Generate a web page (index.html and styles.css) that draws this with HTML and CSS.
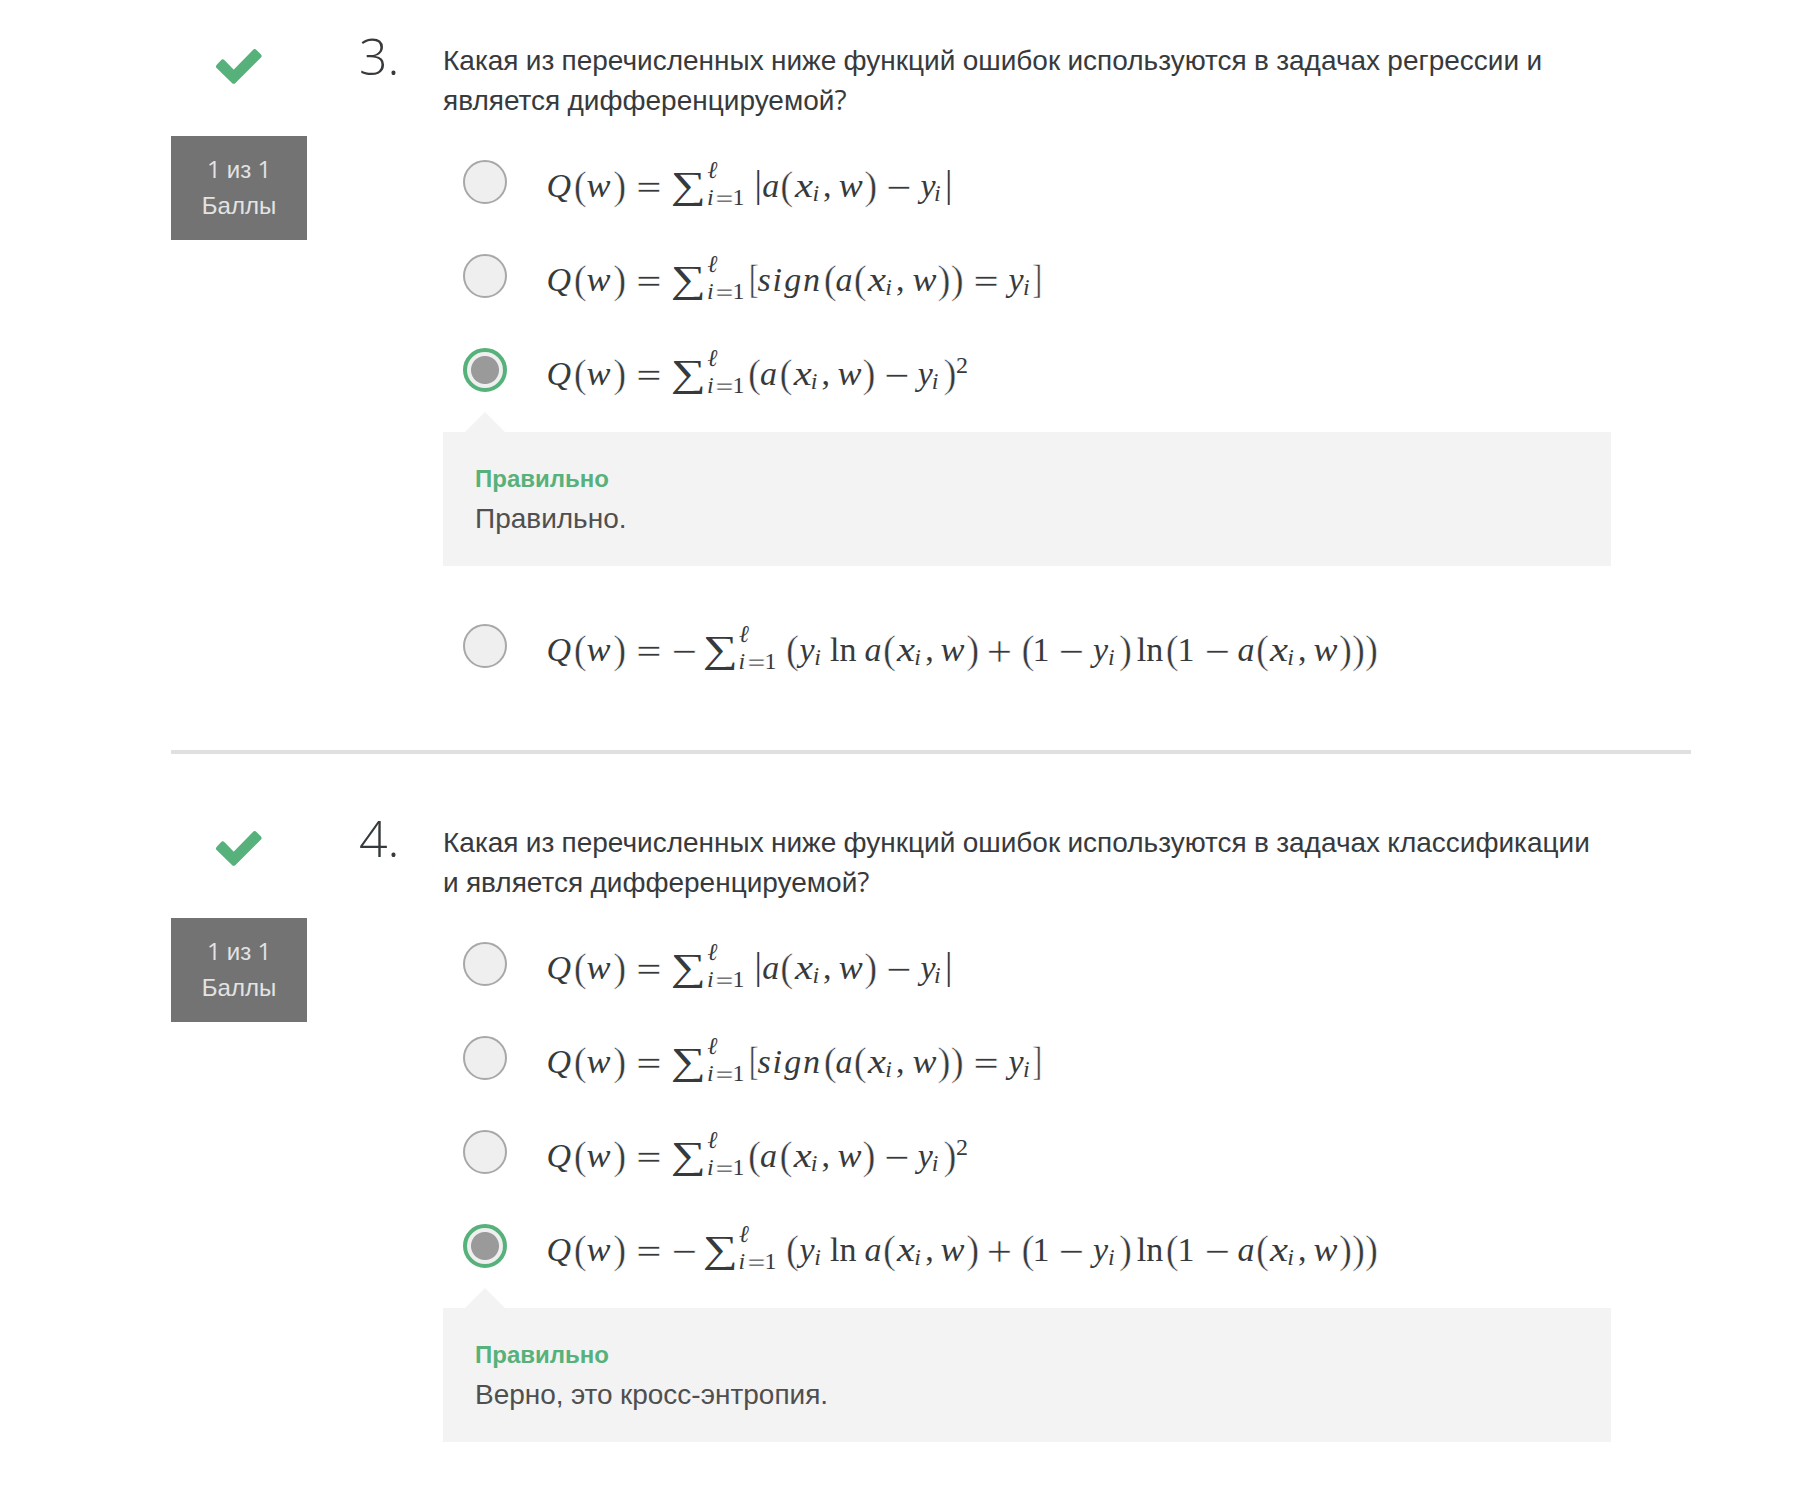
FILE: index.html
```html
<!DOCTYPE html>
<html lang="ru">
<head>
<meta charset="utf-8">
<title>Функции ошибок</title>
<link rel="stylesheet" href="styles.css">
</head>
<body>
<main class="quiz">
  <section class="question">
    <aside class="status">
      <svg class="check" viewBox="0 0 46 35"><path d="M2.600 17.500 6.800 13 17.700 24.200 38.700 2.700 43 7 17.700 32.200Z" /></svg>
      <div class="points"><span class="lat">1</span> из <span class="lat">1</span><br>Баллы</div>
    </aside>
    <div class="number">3.</div>
    <div class="content">
      <p class="prompt"><span class="line">Какая из перечисленных ниже функций ошибок используются в задачах регрессии и</span> <span class="line">является дифференцируемой<span class="lat">?</span></span></p>
      <div class="option"><span class="radio"></span>
        <svg class="formula" width="860" height="60"><text y="46"><tspan x="6.600">Q</tspan><tspan class="p" x="33.800">(</tspan><tspan x="46.500" textLength="24" lengthAdjust="spacingAndGlyphs">w</tspan><tspan class="p" x="73.200">)</tspan><tspan class="o" x="95.500">=</tspan><tspan class="sum" x="131" textLength="35" lengthAdjust="spacingAndGlyphs">∑</tspan><tspan class="sup ell" x="167.500">ℓ</tspan><tspan class="low" x="167">i</tspan><tspan class="low o" x="175">=</tspan><tspan class="low r" x="192.500">1</tspan><tspan class="bar" x="214.500">|</tspan><tspan x="222.300">a</tspan><tspan class="p" x="240.200">(</tspan><tspan x="254.900" textLength="18" lengthAdjust="spacingAndGlyphs">x</tspan><tspan class="sub" x="272.500">i</tspan><tspan class="r" x="283">,</tspan><tspan x="298.800" textLength="24" lengthAdjust="spacingAndGlyphs">w</tspan><tspan class="p" x="324.300">)</tspan><tspan class="o" x="345.500">−</tspan><tspan x="380.400">y</tspan><tspan class="sub" x="394">i</tspan><tspan class="bar" x="405">|</tspan></text></svg></div>
      <div class="option"><span class="radio"></span>
        <svg class="formula" width="860" height="60"><text y="46"><tspan x="6.600">Q</tspan><tspan class="p" x="33.800">(</tspan><tspan x="46.500" textLength="24" lengthAdjust="spacingAndGlyphs">w</tspan><tspan class="p" x="73.200">)</tspan><tspan class="o" x="95.500">=</tspan><tspan class="sum" x="131" textLength="35" lengthAdjust="spacingAndGlyphs">∑</tspan><tspan class="sup ell" x="167.500">ℓ</tspan><tspan class="low" x="167">i</tspan><tspan class="low o" x="175">=</tspan><tspan class="low r" x="192.500">1</tspan><tspan class="p" x="209" textLength="9.500" lengthAdjust="spacingAndGlyphs">[</tspan><tspan x="217.400 232.600 244.300 263.100">sign</tspan><tspan class="p" x="283.800">(</tspan><tspan x="295.400">a</tspan><tspan class="p" x="313.800">(</tspan><tspan x="327.900" textLength="18" lengthAdjust="spacingAndGlyphs">x</tspan><tspan class="sub" x="345.300">i</tspan><tspan class="r" x="356">,</tspan><tspan x="372.500" textLength="24" lengthAdjust="spacingAndGlyphs">w</tspan><tspan class="p" x="397.500 410.700">))</tspan><tspan class="o" x="432.700">=</tspan><tspan x="468.500">y</tspan><tspan class="sub" x="483">i</tspan><tspan class="p" x="492.500" textLength="9.500" lengthAdjust="spacingAndGlyphs">]</tspan></text></svg></div>
      <div class="option"><span class="radio checked"></span>
        <svg class="formula" width="860" height="60"><text y="46"><tspan x="6.600">Q</tspan><tspan class="p" x="33.800">(</tspan><tspan x="46.500" textLength="24" lengthAdjust="spacingAndGlyphs">w</tspan><tspan class="p" x="73.200">)</tspan><tspan class="o" x="95.500">=</tspan><tspan class="sum" x="131" textLength="35" lengthAdjust="spacingAndGlyphs">∑</tspan><tspan class="sup ell" x="167.500">ℓ</tspan><tspan class="low" x="167">i</tspan><tspan class="low o" x="175">=</tspan><tspan class="low r" x="192.500">1</tspan><tspan class="p" x="208.100">(</tspan><tspan x="220.100">a</tspan><tspan class="p" x="239.500">(</tspan><tspan x="253.800" textLength="18" lengthAdjust="spacingAndGlyphs">x</tspan><tspan class="sub" x="270.700">i</tspan><tspan class="r" x="281.600">,</tspan><tspan x="297.400" textLength="24" lengthAdjust="spacingAndGlyphs">w</tspan><tspan class="p" x="322.500">)</tspan><tspan class="o" x="343.500">−</tspan><tspan x="377.800">y</tspan><tspan class="sub" x="391.800">i</tspan><tspan class="p" x="403.500">)</tspan><tspan class="exp r" x="416">2</tspan></text></svg></div>
      <div class="feedback"><h3>Правильно</h3><p>Правильно.</p></div>
      <div class="option"><span class="radio"></span>
        <svg class="formula" width="860" height="60"><text y="46"><tspan x="6.600">Q</tspan><tspan class="p" x="33.800">(</tspan><tspan x="46.500" textLength="24" lengthAdjust="spacingAndGlyphs">w</tspan><tspan class="p" x="73.200">)</tspan><tspan class="o" x="95.500 131">=−</tspan><tspan class="sum" x="163" textLength="35" lengthAdjust="spacingAndGlyphs">∑</tspan><tspan class="sup ell" x="199">ℓ</tspan><tspan class="low" x="198.500">i</tspan><tspan class="low o" x="207">=</tspan><tspan class="low r" x="224.500">1</tspan><tspan class="p" x="246.100">(</tspan><tspan x="259.500">y</tspan><tspan class="sub" x="274.200">i</tspan><tspan class="r" x="290 299.500">ln</tspan><tspan x="324.400">a</tspan><tspan class="p" x="343.100">(</tspan><tspan x="356.900" textLength="18" lengthAdjust="spacingAndGlyphs">x</tspan><tspan class="sub" x="374.200">i</tspan><tspan class="r" x="385.300">,</tspan><tspan x="400.500" textLength="24" lengthAdjust="spacingAndGlyphs">w</tspan><tspan class="p" x="426.200">)</tspan><tspan class="o" x="446">+</tspan><tspan class="p" x="481.400">(</tspan><tspan class="r" x="492.500">1</tspan><tspan class="o" x="518">−</tspan><tspan x="553.100">y</tspan><tspan class="sub" x="568">i</tspan><tspan class="p" x="578.900">)</tspan><tspan class="r" x="596.700 606.200">ln</tspan><tspan class="p" x="625.800">(</tspan><tspan class="r" x="637.500">1</tspan><tspan class="o" x="664">−</tspan><tspan x="697.400">a</tspan><tspan class="p" x="716.100">(</tspan><tspan x="729.900" textLength="18" lengthAdjust="spacingAndGlyphs">x</tspan><tspan class="sub" x="747.200">i</tspan><tspan class="r" x="758">,</tspan><tspan x="773.500" textLength="24" lengthAdjust="spacingAndGlyphs">w</tspan><tspan class="p" x="798.900 811.900 824.900">)))</tspan></text></svg></div>
    </div>
  </section>
  <hr class="divider">
  <section class="question">
    <aside class="status">
      <svg class="check" viewBox="0 0 46 35"><path d="M2.600 17.500 6.800 13 17.700 24.200 38.700 2.700 43 7 17.700 32.200Z" /></svg>
      <div class="points"><span class="lat">1</span> из <span class="lat">1</span><br>Баллы</div>
    </aside>
    <div class="number">4.</div>
    <div class="content">
      <p class="prompt"><span class="line">Какая из перечисленных ниже функций ошибок используются в задачах классификации</span> <span class="line">и является дифференцируемой<span class="lat">?</span></span></p>
      <div class="option"><span class="radio"></span>
        <svg class="formula" width="860" height="60"><text y="46"><tspan x="6.600">Q</tspan><tspan class="p" x="33.800">(</tspan><tspan x="46.500" textLength="24" lengthAdjust="spacingAndGlyphs">w</tspan><tspan class="p" x="73.200">)</tspan><tspan class="o" x="95.500">=</tspan><tspan class="sum" x="131" textLength="35" lengthAdjust="spacingAndGlyphs">∑</tspan><tspan class="sup ell" x="167.500">ℓ</tspan><tspan class="low" x="167">i</tspan><tspan class="low o" x="175">=</tspan><tspan class="low r" x="192.500">1</tspan><tspan class="bar" x="214.500">|</tspan><tspan x="222.300">a</tspan><tspan class="p" x="240.200">(</tspan><tspan x="254.900" textLength="18" lengthAdjust="spacingAndGlyphs">x</tspan><tspan class="sub" x="272.500">i</tspan><tspan class="r" x="283">,</tspan><tspan x="298.800" textLength="24" lengthAdjust="spacingAndGlyphs">w</tspan><tspan class="p" x="324.300">)</tspan><tspan class="o" x="345.500">−</tspan><tspan x="380.400">y</tspan><tspan class="sub" x="394">i</tspan><tspan class="bar" x="405">|</tspan></text></svg></div>
      <div class="option"><span class="radio"></span>
        <svg class="formula" width="860" height="60"><text y="46"><tspan x="6.600">Q</tspan><tspan class="p" x="33.800">(</tspan><tspan x="46.500" textLength="24" lengthAdjust="spacingAndGlyphs">w</tspan><tspan class="p" x="73.200">)</tspan><tspan class="o" x="95.500">=</tspan><tspan class="sum" x="131" textLength="35" lengthAdjust="spacingAndGlyphs">∑</tspan><tspan class="sup ell" x="167.500">ℓ</tspan><tspan class="low" x="167">i</tspan><tspan class="low o" x="175">=</tspan><tspan class="low r" x="192.500">1</tspan><tspan class="p" x="209" textLength="9.500" lengthAdjust="spacingAndGlyphs">[</tspan><tspan x="217.400 232.600 244.300 263.100">sign</tspan><tspan class="p" x="283.800">(</tspan><tspan x="295.400">a</tspan><tspan class="p" x="313.800">(</tspan><tspan x="327.900" textLength="18" lengthAdjust="spacingAndGlyphs">x</tspan><tspan class="sub" x="345.300">i</tspan><tspan class="r" x="356">,</tspan><tspan x="372.500" textLength="24" lengthAdjust="spacingAndGlyphs">w</tspan><tspan class="p" x="397.500 410.700">))</tspan><tspan class="o" x="432.700">=</tspan><tspan x="468.500">y</tspan><tspan class="sub" x="483">i</tspan><tspan class="p" x="492.500" textLength="9.500" lengthAdjust="spacingAndGlyphs">]</tspan></text></svg></div>
      <div class="option"><span class="radio"></span>
        <svg class="formula" width="860" height="60"><text y="46"><tspan x="6.600">Q</tspan><tspan class="p" x="33.800">(</tspan><tspan x="46.500" textLength="24" lengthAdjust="spacingAndGlyphs">w</tspan><tspan class="p" x="73.200">)</tspan><tspan class="o" x="95.500">=</tspan><tspan class="sum" x="131" textLength="35" lengthAdjust="spacingAndGlyphs">∑</tspan><tspan class="sup ell" x="167.500">ℓ</tspan><tspan class="low" x="167">i</tspan><tspan class="low o" x="175">=</tspan><tspan class="low r" x="192.500">1</tspan><tspan class="p" x="208.100">(</tspan><tspan x="220.100">a</tspan><tspan class="p" x="239.500">(</tspan><tspan x="253.800" textLength="18" lengthAdjust="spacingAndGlyphs">x</tspan><tspan class="sub" x="270.700">i</tspan><tspan class="r" x="281.600">,</tspan><tspan x="297.400" textLength="24" lengthAdjust="spacingAndGlyphs">w</tspan><tspan class="p" x="322.500">)</tspan><tspan class="o" x="343.500">−</tspan><tspan x="377.800">y</tspan><tspan class="sub" x="391.800">i</tspan><tspan class="p" x="403.500">)</tspan><tspan class="exp r" x="416">2</tspan></text></svg></div>
      <div class="option"><span class="radio checked"></span>
        <svg class="formula" width="860" height="60"><text y="46"><tspan x="6.600">Q</tspan><tspan class="p" x="33.800">(</tspan><tspan x="46.500" textLength="24" lengthAdjust="spacingAndGlyphs">w</tspan><tspan class="p" x="73.200">)</tspan><tspan class="o" x="95.500 131">=−</tspan><tspan class="sum" x="163" textLength="35" lengthAdjust="spacingAndGlyphs">∑</tspan><tspan class="sup ell" x="199">ℓ</tspan><tspan class="low" x="198.500">i</tspan><tspan class="low o" x="207">=</tspan><tspan class="low r" x="224.500">1</tspan><tspan class="p" x="246.100">(</tspan><tspan x="259.500">y</tspan><tspan class="sub" x="274.200">i</tspan><tspan class="r" x="290 299.500">ln</tspan><tspan x="324.400">a</tspan><tspan class="p" x="343.100">(</tspan><tspan x="356.900" textLength="18" lengthAdjust="spacingAndGlyphs">x</tspan><tspan class="sub" x="374.200">i</tspan><tspan class="r" x="385.300">,</tspan><tspan x="400.500" textLength="24" lengthAdjust="spacingAndGlyphs">w</tspan><tspan class="p" x="426.200">)</tspan><tspan class="o" x="446">+</tspan><tspan class="p" x="481.400">(</tspan><tspan class="r" x="492.500">1</tspan><tspan class="o" x="518">−</tspan><tspan x="553.100">y</tspan><tspan class="sub" x="568">i</tspan><tspan class="p" x="578.900">)</tspan><tspan class="r" x="596.700 606.200">ln</tspan><tspan class="p" x="625.800">(</tspan><tspan class="r" x="637.500">1</tspan><tspan class="o" x="664">−</tspan><tspan x="697.400">a</tspan><tspan class="p" x="716.100">(</tspan><tspan x="729.900" textLength="18" lengthAdjust="spacingAndGlyphs">x</tspan><tspan class="sub" x="747.200">i</tspan><tspan class="r" x="758">,</tspan><tspan x="773.500" textLength="24" lengthAdjust="spacingAndGlyphs">w</tspan><tspan class="p" x="798.900 811.900 824.900">)))</tspan></text></svg></div>
      <div class="feedback"><h3>Правильно</h3><p>Верно, это кросс-энтропия.</p></div>
    </div>
  </section>
</main>
</body>
</html>
```
FILE: styles.css
```css
* { box-sizing: border-box; }
body {
  margin: 0;
  background: #fff;
  color: #373a3c;
  font-family: "Liberation Sans", Arial, sans-serif;
  font-size: 28px;
  line-height: 40px;
  word-spacing: -0.5px;
}
h3, p { margin: 0; }
.quiz { width: 1520px; margin-left: 171px; padding-top: 28px; }
.question {
  display: grid;
  grid-template-columns: 136px 52px 84px 1168px;
}
.status { display: flex; flex-direction: column; align-items: center; }
.check { width: 46px; height: 35px; margin-top: 21px; }
.check path {
  fill: #56b17b;
  stroke: #56b17b;
  stroke-width: 5;
  stroke-linejoin: round;
}
.points {
  width: 136px;
  height: 104px;
  margin-top: 52px;
  padding-top: 16px;
  background: #737373;
  color: #e3e3e3;
  font-size: 24px;
  line-height: 36px;
  text-align: center;
}
.lat { font-family: "Open Sans", sans-serif; font-weight: 400; line-height: 1; }
.number {
  grid-column: 3;
  font-family: "Open Sans", sans-serif;
  font-weight: 300;
  font-size: 50px;
  line-height: 56px;
}
.content { padding-top: 13px; }
.prompt { height: 80px; margin-bottom: 14px; }
.line { display: block; white-space: nowrap; }
.option { display: flex; align-items: center; height: 94px; padding-left: 20px; }
.radio {
  width: 44px;
  height: 44px;
  border: 2px solid #a8a8a8;
  border-radius: 50%;
  background: #efefef;
}
.radio.checked {
  border: 4px solid #56b17b;
  background: radial-gradient(circle, #9a9a9a 13.5px, #efefef 14.5px);
}
.formula { display: block; margin-left: 33px; margin-top: -2px; overflow: visible; }
.formula text {
  fill: #373a3c;
  font-family: "Liberation Serif", "Times New Roman", serif;
  font-style: italic;
  font-size: 34px;
}
.formula .p { font-style: normal; font-size: 39px; baseline-shift: -1.5px; stroke: #fff; stroke-width: 0.5px; }
.formula .r { font-style: normal; }
.formula .o {
  font-family: "DejaVu Math TeX Gyre", "Liberation Serif", serif;
  font-style: normal;
  stroke: #fff;
  stroke-width: 0.7px;
}
.formula .bar { font-style: normal; font-size: 37px; }
.formula .sum { font-style: normal; font-size: 38px; baseline-shift: -0.5px; }
.formula .low { font-size: 24px; baseline-shift: -8px; }
.formula .sub { font-size: 24px; baseline-shift: -4px; }
.formula .sup { font-size: 24px; baseline-shift: 19px; }
.formula .exp { font-size: 24px; baseline-shift: 12px; }
.feedback {
  position: relative;
  height: 134px;
  margin: 15px 0 33px;
  padding: 26px 32px;
  background: #f3f3f3;
  color: #4f4f4f;
}
.feedback::before {
  content: "";
  position: absolute;
  left: 22px;
  top: -20px;
  border: solid transparent;
  border-width: 0 20px 20px;
  border-bottom-color: #f3f3f3;
}
.feedback h3 { color: #56b17b; font-size: 24px; line-height: 41px; }
.divider { height: 4px; margin: 57px 0 56px; border: 0; background: #e0e0e0; }
```
